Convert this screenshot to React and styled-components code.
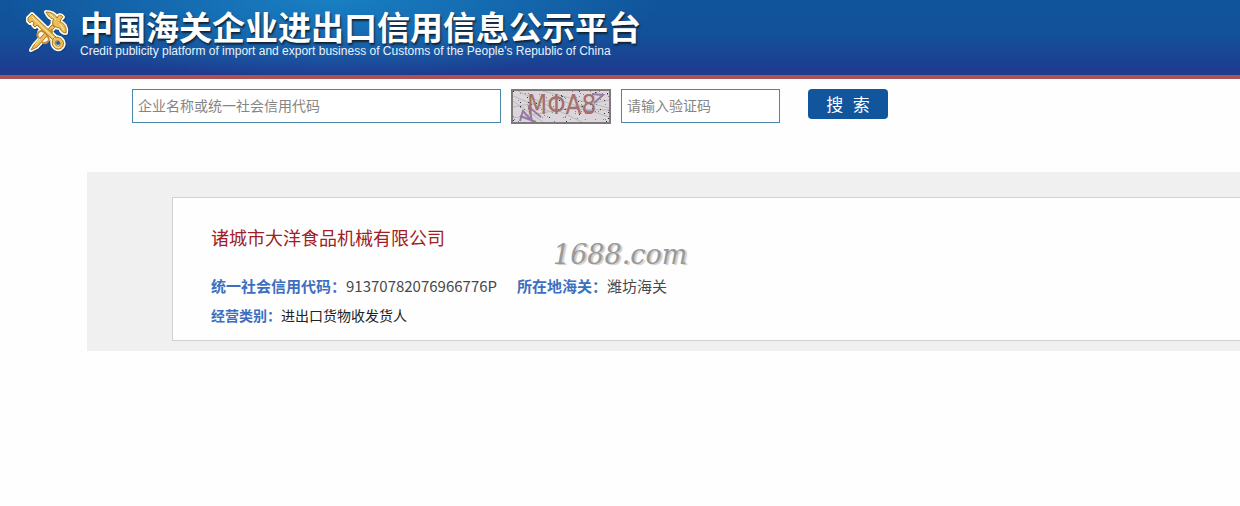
import React, { Component } from 'react';
import styled, { createGlobalStyle } from 'styled-components'


const GlobalStyle = createGlobalStyle`
  * {
    box-sizing: border-box;
  }

  body {
    margin: 0;
    background: #fefefe;
    color: #333;
    font-family: "Noto Sans CJK SC", sans-serif;
    font-size: 15px;
  }
`;

const Header = styled.header`
  display: flex;
  align-items: flex-start;
  gap: 10px;
  height: 79px;
  padding: 8px 24px 0;
  border-bottom: 4px solid #a95355;
  background:
    radial-gradient(ellipse 330px 80px at 330px 0, rgba(26, 132, 200, .9), rgba(26, 132, 200, 0)),
    linear-gradient(to bottom, #10559b 0%, #12519a 45%, #1f3a8e 100%);
`;

const Emblem = styled.svg`
  width: 46px;
  height: 46px;
  flex: none;
`;

const Brand = styled.div`
  color: #fff;
  white-space: nowrap;
`;

const Title = styled.h1`
  margin: 0;
  font-size: 33px;
  line-height: 36px;
  font-weight: bold;
  text-shadow: 1px 2px 2px #123;
`;

const Subtitle = styled.p`
  margin: 0;
  font-family: "Liberation Sans", sans-serif;
  font-size: 12px;
  line-height: 14px;
  color: #e8f2fb;
`;

const SearchForm = styled.form`
  display: flex;
  align-items: flex-start;
  gap: 10px;
  padding: 10px 132px 0;
`;

const TextBox = styled.input`
  width: ${props => props.$wide ? '369px' : '159px'};
  height: 34px;
  padding: 0 5px 2px;
  border: 1px solid #4a86a8;
  background: #fff;
  color: #333;
  font-family: inherit;
  font-size: 14px;

  &::placeholder {
    color: #858585;
    opacity: 1;
  }
`;

const Captcha = styled.svg`
  width: 100px;
  height: 35px;
  flex: none;
  border: 2px solid #7c7a7a;
  background: #dcd5dc;
`;

const SearchButton = styled.button`
  width: 80px;
  height: 30px;
  margin-left: 18px;
  padding: 0 0 2px;
  border: 0;
  border-radius: 4px;
  background: #11559d;
  color: #fff;
  font-family: "Liberation Sans", "Noto Sans CJK SC", sans-serif;
  font-size: 17px;
  cursor: pointer;
`;

const Results = styled.main`
  margin: 48px 0 0 87px;
  padding: 25px 0 10px 85px;
  background: #f0f0f0;
`;

const Card = styled.section`
  position: relative;
  padding: 22px 38px 9px;
  border: 1px solid #d2d2d2;
  border-right: 0;
  background: #fefefe;
`;

const CompanyName = styled.h2`
  margin: 0 0 19px;
  color: #a02024;
  font-size: 18px;
  line-height: 34px;
  font-weight: normal;
`;

const Details = styled.dl`
  display: flex;
  gap: 20px;
  margin: 0;
  font-size: ${props => props.$small ? '14px' : '15px'};
  line-height: ${props => props.$small ? '32px' : '26px'};
`;

const Field = styled.div`
  display: flex;
`;

const Label = styled.dt`
  color: #3c6fc0;
  font-weight: bold;
`;

const Value = styled.dd`
  margin: 0;
  color: ${props => props.$dark ? '#222' : '#484848'};
`;

const Watermark = styled.span`
  position: absolute;
  top: 40px;
  left: 380px;
  color: #999;
  font-family: "DejaVu Serif", serif;
  font-size: 27px;
  line-height: 34px;
  font-style: italic;
  text-shadow: 2px 1px 1px #ccc;
  pointer-events: none;
`;


// scattered dots behind the captcha letters
const specks = Array.from({ length: 110 }, (_, i) => ({
  x: (i * 37 + (i * i * 13) % 89) % 96,
  y: (i * 19 + (i * i * 7) % 53) % 31,
  fill: ['#343038', '#98779e', '#779080'][i % 3]
}));

const Staff = () => (
  <>
    <path d="M11 45 L14 40 L32 20 L35 22 L17 42 Z" />
    <path d="M26 7 C31 7 35 9 37 13 C38 10 41 9 43 12 L41 14 L40 17 C44 18 47 22 46 28 C43 28 41 26 40 23 C38 23 35 22 33 20 C32 17 33 15 34 14 C31 14 28 11 26 7 Z" />
  </>
);

const Key = () => (
  <>
    <path d="M8 13 L12 9 L38 34 L35 37 L17 20 L15 22 L13 20 L14 18 L12 16 L10 18 L8 16 Z" />
    <path fillRule="evenodd" d="M33 34 C35 31 41 32 43 36 C45 41 41 45 37 44 C33 43 31 38 33 34 Z M36 36 C34 39 37 42 39 41 C42 39 39 35 36 36 Z" />
  </>
);


export default class App extends Component{

  constructor(props) {
    super(props);
    this.state = {
      keyword: '',
      code: ''
    };
  }

  onChange = e => {
    this.setState({ [e.target.name]: e.target.value });
  }

  onSubmit = e => {
    e.preventDefault();
  }

  render(){

    const {keyword, code} = this.state;

    return(
      <>
        <GlobalStyle />
        <Header>
          <Emblem viewBox="4 3 46 46" aria-hidden="true">
            <g fill="#0d356f" stroke="#0d356f" strokeWidth="4" strokeLinejoin="round" opacity=".5" transform="translate(1 1)">
              <Staff /><Key />
            </g>
            <g fill="#fffbee" stroke="#fffbee" strokeWidth="4" strokeLinejoin="round">
              <Staff /><Key />
              <circle cx="25" cy="29" r="6" />
            </g>
            <g fill="#eebd58" stroke="#a87524" strokeWidth="1" strokeLinejoin="round">
              <Staff />
              <path d="M19 33 C15 29 20 24 24 27 C28 31 34 28 31 24 M22 37 C25 40 31 36 28 32 C25 29 28 25 33 27" fill="none" stroke="#c68e32" strokeWidth="2" />
              <Key />
            </g>
            <path d="M12 12 L35 34 M15 40 L20 34 M30 9 L36 15 M40 19 L44 25 M34 39 C34 42 38 43 40 42" fill="none" stroke="#fff0ac" strokeWidth="1" />
            <circle cx="38" cy="38" r="2" fill="#245ba5" />
          </Emblem>
          <Brand>
            <Title>中国海关企业进出口信用信息公示平台</Title>
            <Subtitle>Credit publicity platform of import and export business of Customs of the People's Republic of China</Subtitle>
          </Brand>
        </Header>

        <SearchForm onSubmit={this.onSubmit}>
          <TextBox $wide name="keyword" aria-label="企业名称或统一社会信用代码" placeholder="企业名称或统一社会信用代码" value={keyword} onChange={this.onChange} />
          <Captcha viewBox="0 0 96 31" role="img" aria-label="验证码">
            <g fill="none" stroke="#b0beb2" strokeWidth="1">
              <path d="M0 5 L38 21 L96 9 M0 16 L44 8 L96 26 M5 0 L69 31 M0 27 L52 18 L96 19 M30 0 L96 17 M0 10 L30 31" />
            </g>
            {specks.map((s, i) => (
              <rect key={i} x={s.x} y={s.y} width="1" height="1" fill={s.fill} />
            ))}
            {/* loose pen strokes */}
            <g fill="none" stroke="#9678a4" strokeWidth="2">
              <path d="M7 30 L10 20 L19 30 L16 16 L28 26 M7 25 L23 31" />
              <path d="M79 3 L90 4 L81 12 M72 20 L79 21" />
            </g>
            <text x="14" y="23" fontFamily="Liberation Sans Narrow, DejaVu Sans Condensed, sans-serif" fontSize="26" fill="#a56f6b">MΦA8</text>
          </Captcha>
          <TextBox name="code" aria-label="请输入验证码" placeholder="请输入验证码" value={code} onChange={this.onChange} />
          <SearchButton type="submit">搜&nbsp;&nbsp;索</SearchButton>
        </SearchForm>

        <Results>
          <Card>
            <CompanyName>诸城市大洋食品机械有限公司</CompanyName>
            <Details>
              <Field>
                <Label>统一社会信用代码：</Label>
                <Value>91370782076966776P</Value>
              </Field>
              <Field>
                <Label>所在地海关：</Label>
                <Value>潍坊海关</Value>
              </Field>
            </Details>
            <Details $small>
              <Field>
                <Label>经营类别：</Label>
                <Value $dark>进出口货物收发货人</Value>
              </Field>
            </Details>
            <Watermark>1688.com</Watermark>
          </Card>
        </Results>
      </>
    );
  }

}
